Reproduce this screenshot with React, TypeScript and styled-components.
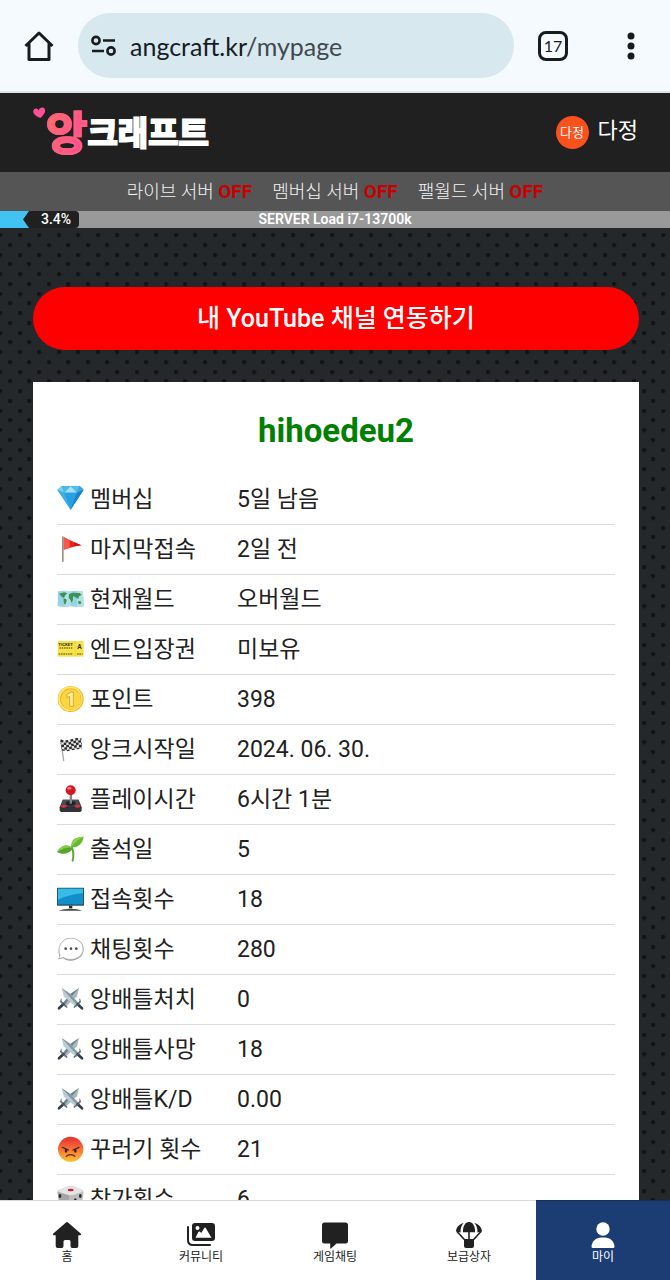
import React from 'react';
import styled, { createGlobalStyle } from 'styled-components';

const GlobalStyle = createGlobalStyle`
  *, *::before, *::after { box-sizing: border-box; }
  body {
    margin: 0;
    font-family: Roboto, 'Noto Sans CJK KR', sans-serif;
    color: #212121;
    background: #25282a;
  }
  button { font: inherit; border: 0; cursor: pointer; }
  a { color: inherit; text-decoration: none; }
`;

/* ---------- Browser bar ---------- */

const Screen = styled.div`
  display: flex;
  flex-direction: column;
  height: 100vh;
`;

const BrowserBar = styled.div`
  display: flex;
  align-items: center;
  flex: none;
  height: 93px;
  padding: 0 24px;
  background: #f5faff;
  border-bottom: 2px solid #dde3ea;
`;

const BarButton = styled.button`
  display: flex;
  align-items: center;
  justify-content: center;
  flex: none;
  width: 30px;
  height: 32px;
  padding: 0;
  background: none;
  color: #171c1f;
`;

const AddressBar = styled.button`
  display: flex;
  align-items: center;
  flex: 1;
  gap: 13px;
  height: 65px;
  margin: 0 24px;
  padding: 0 12px;
  border-radius: 33px;
  background: #d7e8ef;
  color: #171c1f;
  font-family: Lato, 'Noto Sans CJK KR', sans-serif;
  font-size: 25px;
  line-height: 32px;
`;

const UrlPath = styled.span`
  color: #41494d;
`;

const TabCount = styled.span`
  display: flex;
  align-items: center;
  justify-content: center;
  width: 30px;
  height: 30px;
  border: 3px solid #171c1f;
  border-radius: 8px;
  font-family: Lato, sans-serif;
  font-size: 16px;
  line-height: 16px;
`;

const BarSpacer = styled.span`
  flex: none;
  width: 48px;
`;

/* ---------- Site header ---------- */

const SiteHeader = styled.header`
  display: flex;
  align-items: center;
  justify-content: space-between;
  flex: none;
  height: 79px;
  padding: 0 32px 0 33px;
  background: #202020;
`;

const Logo = styled.a`
  display: flex;
  align-items: center;
  padding-bottom: 4px;
  font-family: 'Noto Sans CJK KR', sans-serif;
  font-weight: 700;
`;

const LogoHeart = styled.svg`
  align-self: flex-start;
  margin: 4px 0 0;
  transform: rotate(-6deg);
`;

const LogoAccent = styled.span`
  font-size: 45px;
  line-height: 56px;
  background: linear-gradient(110deg, #fb7360 15%, #fe5f7d 45%, #fb4f96 80%);
  background-clip: text;
  color: transparent;
  -webkit-text-stroke: 2px #fe5f80;
`;

const LogoText = styled.span`
  font-size: 33px;
  line-height: 48px;
  color: #fff;
  -webkit-text-stroke: 2px #fff;
`;

const UserLink = styled.a`
  display: flex;
  align-items: center;
  gap: 9px;
  color: #fff;
  font-size: 22px;
  line-height: 32px;
`;

const Avatar = styled.span`
  display: flex;
  align-items: center;
  justify-content: center;
  width: 33px;
  height: 33px;
  border-radius: 50%;
  background: #f8511d;
  font-size: 13px;
`;

const UserName = styled.span`
  padding-bottom: 4px;
`;

const ServerList = styled.ul`
  display: flex;
  align-items: center;
  justify-content: center;
  flex: none;
  gap: 20px;
  height: 39px;
  margin: 0;
  padding: 0;
  list-style: none;
  background: #555;
  color: #f4f4f4;
  font-size: 18px;
  font-weight: 300;
  line-height: 24px;
`;

const ServerState = styled.strong`
  font-size: 19px;
  font-weight: 700;
  color: #c80000;
`;

const LoadBar = styled.div`
  display: grid;
  grid-template-columns: 1fr auto 1fr;
  align-items: center;
  flex: none;
  height: 17px;
  background: #999;
  color: #fff;
  font-size: 14px;
  font-weight: 600;
  line-height: 17px;
`;

const LoadGauge = styled.div`
  display: flex;
  height: 17px;
`;

const LoadFill = styled.span`
  width: 29px;
  background: #41c4f2;
`;

const LoadTag = styled.span`
  margin-left: -6px;
  padding: 0 8px 0 18px;
  border-radius: 0 4px 4px 0;
  background: #202020;
  font-weight: 500;
  clip-path: polygon(0 50%, 6px 0, 100% 0, 100% 100%, 6px 100%);
`;

/* ---------- Page content ---------- */

const dot = 'radial-gradient(circle at 2px 2px, #101213 1px, #101213aa 2px, transparent 3px)';

const Content = styled.main`
  flex: 1;
  min-height: 0;
  overflow: auto;
  scrollbar-width: none;
  padding: 59px 31px 32px 33px;
  background-color: #24282a;
  background-image: ${Array(8).fill(dot).join(', ')};
  background-size: 39px 39px;
  background-position:
    -2px 5px, 18px 5px, 8px 15px, 27px 15px,
    -2px 25px, 18px 25px, 8px 34px, 27px 34px;
`;

const ConnectButton = styled.button`
  display: block;
  width: 100%;
  height: 63px;
  border-radius: 32px;
  background: #f00;
  color: #fff;
  font-size: 25px;
  font-weight: 500;
  line-height: 32px;
`;

const Card = styled.section`
  margin-top: 32px;
  padding: 24px;
  background: #fff;
`;

const Nickname = styled.h1`
  margin: 0 0 18px;
  color: #008000;
  font-size: 33px;
  font-weight: 700;
  line-height: 50px;
  text-align: center;
`;

const StatTable = styled.table`
  width: 100%;
  border-collapse: collapse;
  font-size: 23px;
  line-height: 32px;
  text-align: left;
`;

const StatRow = styled.tr`
  height: 50px;
  border-bottom: 1px solid #dcdcdc;
`;

const StatName = styled.th`
  width: 180px;
  padding: 2px 0 0;
  font-weight: 400;
`;

const StatLabel = styled.span`
  display: flex;
  align-items: center;
  gap: 6px;
  white-space: nowrap;
`;

const StatIcon = styled.svg`
  flex: none;
  margin-bottom: 4px;
`;

const StatValue = styled.td`
  padding: 2px 0 0;
`;

/* ---------- Bottom navigation ---------- */

const BottomNav = styled.nav`
  display: grid;
  grid-template-columns: repeat(5, 1fr);
  flex: none;
  height: 80px;
  background: #fff;
`;

const NavItem = styled.a<{ $active?: boolean }>`
  display: flex;
  flex-direction: column;
  align-items: center;
  justify-content: center;
  padding-top: 4px;
  border-top: 1px solid ${p => (p.$active ? '#152d57' : '#d8d8d8')};
  background: ${p => (p.$active ? '#1c3c74' : '#fff')};
  color: ${p => (p.$active ? '#fff' : '#212121')};
  font-size: 12px;
  line-height: 16px;
`;

/* ---------- Stat icons ---------- */

const Emoji = ({ children }: { children: React.ReactNode }) => (
  <StatIcon width="27" height="27" viewBox="0 0 81 81" aria-hidden="true">{children}</StatIcon>
);

const Diamond = () => (
  <Emoji>
    <path d="M14 6H68L80 17 41 77 1 17Z" fill="#2b9fe0" />
    <path d="M14 6 22 26 1 17Z" fill="#7dd0f2" />
    <path d="M14 6H41L22 26Z" fill="#4cb8ec" />
    <path d="M41 6 22 26H60Z" fill="#a5e2f8" />
    <path d="M41 6H68L60 26Z" fill="#54bdee" />
    <path d="M68 6 80 17 60 26Z" fill="#3aa5e2" />
    <path d="M1 17 22 26 41 77Z" fill="#3fb1e9" />
    <path d="M22 26H60L41 77Z" fill="#28a0e2" />
    <path d="M60 26 80 17 41 77Z" fill="#1a80c8" />
  </Emoji>
);

const RedFlag = () => (
  <Emoji>
    <path d="M20 6C38 16 54 22 73 31 52 33 36 40 20 44Z" fill="#f0201c" />
    <path d="M20 6C30 12 34 14 38 16V38L20 44Z" fill="#f9574a" />
    <path d="M52 22 73 31 52 34Z" fill="#d01216" />
    <rect x="15" y="4" width="5" height="77" rx="2" fill="#9b918c" />
  </Emoji>
);

const WorldMap = () => (
  <Emoji>
    <path d="M3 19 22 17 41 19 60 17 78 19 80 64 60 66 41 64 22 66 2 64Z" fill="#94d5e0" />
    <path d="M22 17 41 19V64L22 66ZM60 17 78 19 80 64 60 66Z" fill="#b0e2e8" />
    <path d="M7 26 22 22 31 25 25 31 21 38 16 37 10 31ZM20 40 28 43 29 49 24 60 20 52ZM36 27 47 23 68 24 74 30 66 34 64 42 58 38 53 35 48 34 48 44 44 53 39 43 35 39ZM63 49 71 48 73 56 65 57Z" fill="#3f9158" />
  </Emoji>
);

const Ticket = () => (
  <Emoji>
    <rect x="2" y="18" width="78" height="47" fill="#f6e34b" />
    <path d="M54 18V65" stroke="#d1b92d" strokeWidth="2" strokeDasharray="3 3" />
    <text x="4" y="34" fontSize="13" fontWeight="700" fill="#342f17">TICKET</text>
    <text x="61" y="41" fontSize="20" fontWeight="700" fill="#342f17">A</text>
    <path d="M7 39H46M5 57H48M60 57H77" stroke="#50491f" strokeWidth="3" strokeDasharray="5 2" />
  </Emoji>
);

const Coin = () => (
  <Emoji>
    <circle cx="41" cy="42" r="39" fill="#eab522" />
    <circle cx="40" cy="41" r="37" fill="#fde56b" />
    <circle cx="41" cy="42" r="32" fill="#efb92a" />
    <circle cx="42" cy="43" r="30" fill="#fbd643" />
    <path d="M29 29 42 21H49V64H38V34L31 38Z" fill="#fff09a" stroke="#c88b13" strokeWidth="2" />
  </Emoji>
);

const CheckeredFlag = () => (
  <Emoji>
    <path d="M11 13 20 77" stroke="#aaa" strokeWidth="4" strokeLinecap="round" />
    <path d="M10 13C32 23 50 5 73 10L75 43C54 39 38 54 16 45Z" fill="#e8e8e8" />
    <g fill="none" stroke="#292929" strokeWidth="7">
      <path d="M11 17C32 26 50 8 73 13" strokeDasharray="8 7" />
      <path d="M12 24C33 33 51 15 73 20" strokeDasharray="8 7" strokeDashoffset="7" />
      <path d="M13 31C34 40 52 22 74 27" strokeDasharray="8 7" />
      <path d="M14 38C35 47 53 29 74 34" strokeDasharray="8 7" strokeDashoffset="7" />
      <path d="M15 44C36 53 53 36 75 41" strokeWidth="4" strokeDasharray="8 7" />
    </g>
  </Emoji>
);

const Joystick = () => (
  <Emoji>
    <path d="M17 44H65L74 67V77L70 81H12L8 77V67Z" fill="#303236" />
    <path d="M18 44H64L70 64H12Z" fill="#4b4e53" />
    <ellipse cx="41" cy="55" rx="15" ry="7" fill="#202226" />
    <rect x="38" y="28" width="7" height="28" fill="#81858a" />
    <circle cx="41" cy="16" r="15" fill="#d91621" />
    <ellipse cx="37" cy="10" rx="6" ry="4" fill="#f5858a" />
    <ellipse cx="20" cy="64" rx="9" ry="4" fill="#ee2a3a" />
    <ellipse cx="62" cy="64" rx="9" ry="4" fill="#ee2a3a" />
  </Emoji>
);

const Seedling = () => (
  <Emoji>
    <path d="M44 37C51 50 50 63 47 77" fill="none" stroke="#65a838" strokeWidth="6" strokeLinecap="round" />
    <path d="M43 37C40 14 57 4 80 5 77 25 64 38 43 37Z" fill="#68b82f" />
    <path d="M44 34C42 17 58 7 80 5 66 12 54 20 44 34Z" fill="#8fd34f" />
    <path d="M47 41C36 57 17 61 0 51 12 31 30 24 47 41Z" fill="#57a52a" />
    <path d="M45 39C29 34 15 44 0 51 12 31 30 24 45 39Z" fill="#86cc48" />
  </Emoji>
);

const Monitor = () => (
  <Emoji>
    <rect x="0" y="8" width="81" height="54" rx="1" fill="#24566e" />
    <rect x="3" y="11" width="75" height="47" fill="#128fc9" />
    <path d="M3 11H78V25C50 27 24 34 3 44Z" fill="#36bce6" />
    <path d="M36 62H46V70H36Z" fill="#292d30" />
    <path d="M5 77C22 69 60 69 76 77Z" fill="#44494c" />
  </Emoji>
);

const Bubble = () => (
  <Emoji>
    <path d="M41 9C63 9 80 22 80 43S62 77 41 77C30 77 23 74 17 69 13 72 8 73 3 72 7 68 8 63 6 59 0 32 16 9 41 9Z" fill="#9a9a9a" />
    <path d="M40 10C62 9 78 23 78 42S61 73 41 73C30 73 24 71 18 66 14 69 10 70 6 70 9 65 10 61 8 57 1 31 17 11 40 10Z" fill="#fff" stroke="#b5b5b5" strokeWidth="2" />
    <g fill="#505050"><circle cx="26" cy="41" r="4" /><circle cx="42" cy="41" r="4" /><circle cx="58" cy="41" r="4" /></g>
  </Emoji>
);

const Swords = () => (
  <Emoji>
    <path d="M66 9 60 34 24 67 15 57 43 25Z" fill="#a7b8c1" />
    <path d="M66 9 20 62 15 57 43 25Z" fill="#70838f" />
    <path d="M14 9 20 34 58 67 67 57 37 25Z" fill="#bdcbd2" />
    <path d="M14 9 62 62 67 57 37 25Z" fill="#8497a2" />
    <path d="M11 49 29 66M70 49 52 66" stroke="#61717c" strokeWidth="5" strokeLinecap="round" />
    <path d="M19 58 6 70M62 58 75 70" stroke="#353e47" strokeWidth="8" strokeLinecap="round" />
    <path d="M13 41C10 52 16 60 25 62M68 41C71 52 66 60 56 62" stroke="#72818b" strokeWidth="3" fill="none" />
  </Emoji>
);

const Angry = () => (
  <Emoji>
    <defs>
      <linearGradient id="angry" x1="0" y1="0" x2="0" y2="1">
        <stop offset="0.1" stopColor="#ec3831" /><stop offset="0.55" stopColor="#f57c35" /><stop offset="1" stopColor="#fdc531" />
      </linearGradient>
    </defs>
    <circle cx="41" cy="43" r="38" fill="url(#angry)" />
    <path d="M16 37 34 45M66 37 48 45" stroke="#48231b" strokeWidth="4" strokeLinecap="round" />
    <ellipse cx="27" cy="47" rx="4" ry="6" fill="#48231b" />
    <ellipse cx="55" cy="47" rx="4" ry="6" fill="#48231b" />
    <path d="M28 64C34 57 48 57 54 64" fill="none" stroke="#642c1a" strokeWidth="4" strokeLinecap="round" />
  </Emoji>
);

const Dice = () => (
  <Emoji>
    <path d="M7 14 34 4H50L74 14C80 17 80 22 79 28L73 62 43 80H35L8 62 2 28C1 20 2 16 7 14Z" fill="#bdbdbd" />
    <path d="M7 14 34 4H50L74 14C78 17 78 20 73 22L47 31H35L8 22C3 20 3 16 7 14Z" fill="#e4e4e4" />
    <path d="M2 21 36 31V79L8 62Z" fill="#a4a4a4" />
    <ellipse cx="41" cy="15" rx="9" ry="4" fill="#cb1935" />
    <ellipse cx="9" cy="33" rx="4" ry="6" fill="#2a2a2a" />
    <ellipse cx="70" cy="33" rx="4" ry="6" fill="#2a2a2a" />
    <ellipse cx="55" cy="46" rx="4" ry="6" fill="#2a2a2a" />
  </Emoji>
);

const stats: { Icon: React.FC; name: string; value: string }[] = [
  { Icon: Diamond, name: '멤버십', value: '5일 남음' },
  { Icon: RedFlag, name: '마지막접속', value: '2일 전' },
  { Icon: WorldMap, name: '현재월드', value: '오버월드' },
  { Icon: Ticket, name: '엔드입장권', value: '미보유' },
  { Icon: Coin, name: '포인트', value: '398' },
  { Icon: CheckeredFlag, name: '앙크시작일', value: '2024. 06. 30.' },
  { Icon: Joystick, name: '플레이시간', value: '6시간 1분' },
  { Icon: Seedling, name: '출석일', value: '5' },
  { Icon: Monitor, name: '접속횟수', value: '18' },
  { Icon: Bubble, name: '채팅횟수', value: '280' },
  { Icon: Swords, name: '앙배틀처치', value: '0' },
  { Icon: Swords, name: '앙배틀사망', value: '18' },
  { Icon: Swords, name: '앙배틀K/D', value: '0.00' },
  { Icon: Angry, name: '꾸러기 횟수', value: '21' },
  { Icon: Dice, name: '참가횟수', value: '6' },
];

/* ---------- Navigation icons ---------- */

const NavIcon = ({ children }: { children: React.ReactNode }) => (
  <svg width="30" height="28" viewBox="0 0 30 28" fill="currentColor" aria-hidden="true">{children}</svg>
);

const navItems = [
  {
    label: '홈',
    icon: <path d="M14 1.4Q15 .6 16 1.4L28.7 12.4Q29.8 13.8 28.4 14.2H26.3V25Q26.3 27 24.3 27H20.2Q18.5 27 18.5 25V20.5Q18.5 19 17 19H13Q11.5 19 11.5 20.5V25Q11.5 27 9.8 27H5.7Q3.7 27 3.7 25V14.2H1.6Q.2 13.8 1.3 12.4Z" />,
  },
  {
    label: '커뮤니티',
    icon: (
      <>
        <path fillRule="evenodd" d="M9 2H26Q29 2 29 5V17Q29 20 26 20H9Q6 20 6 17V5Q6 2 9 2ZM11.5 5A2 2 0 1 0 11.5 9A2 2 0 1 0 11.5 5ZM9.500 16.800H25.500L20 7.400Q19 5.800 18 7.400L15.200 12 13.800 10.600Q13 10 12.400 11Z" />
        <path d="M2 6V19Q2 24 7 24H24" fill="none" stroke="currentColor" strokeWidth="2" strokeLinecap="round" />
      </>
    ),
  },
  {
    label: '게임채팅',
    icon: <path d="M4.500 1.500H25.500Q28 1.500 28 4V20Q28 22.500 25.500 22.500H16.500L11 27.500Q10.200 28 10.200 26.800V22.500H4.500Q2 22.500 2 20V4Q2 1.500 4.500 1.500Z" />,
  },
  {
    label: '보급상자',
    icon: (
      <>
        <path d="M9 11.300C8.500 6 11 1 15 1S21.500 6 21 11.300Z" />
        <path d="M9.700 1.800C5 3.300 2 7 2 10.500L6.500 11.500C6.400 7.500 7.500 4 9.700 1.800ZM20.300 1.800C25 3.300 28 7 28 10.500L23.500 11.500C23.600 7.500 22.500 4 20.300 1.800Z" />
        <path d="M3 10.500 10.800 19M27 10.500 19.200 19M15 11V19" stroke="currentColor" strokeWidth="1.600" />
        <path d="M10 18H20V25Q20 27 18 27H12Q10 27 10 25Z" />
      </>
    ),
  },
  {
    label: '마이',
    active: true,
    icon: (
      <>
        <circle cx="15" cy="8" r="6.700" />
        <path d="M3.500 26C3.500 20.500 8 16.500 13 16.500H17C22 16.500 26.500 20.500 26.500 26Q26.500 27 25 27H5Q3.500 27 3.500 26Z" />
      </>
    ),
  },
];

const servers = ['라이브 서버', '멤버십 서버', '팰월드 서버'];

export default function App() {
  return (
    <>
      <GlobalStyle />
      <Screen>
        <BrowserBar>
          <BarButton aria-label="Home">
            <svg width="30" height="32" viewBox="0 0 30 32" fill="none" stroke="currentColor" strokeWidth="3" strokeLinejoin="round" aria-hidden="true">
              <path d="M1.500 16 15 3 28.500 16M5 13.500V29.500H25V13.500" />
            </svg>
          </BarButton>
          <AddressBar aria-label="angcraft.kr/mypage">
            <svg width="27" height="22" viewBox="0 0 27 22" fill="none" stroke="currentColor" strokeWidth="2.600" aria-hidden="true">
              <circle cx="6" cy="5.500" r="3.600" />
              <path d="M13 5.500H25M2 16H14" />
              <circle cx="21" cy="16" r="3.600" />
            </svg>
            <span>angcraft.kr<UrlPath>/mypage</UrlPath></span>
          </AddressBar>
          <BarButton aria-label="Tabs"><TabCount>17</TabCount></BarButton>
          <BarSpacer />
          <BarButton aria-label="Menu">
            <svg width="8" height="28" viewBox="0 0 8 28" fill="currentColor" aria-hidden="true">
              <circle cx="4" cy="4" r="3.500" /><circle cx="4" cy="14" r="3.500" /><circle cx="4" cy="24" r="3.500" />
            </svg>
          </BarButton>
        </BrowserBar>

        <SiteHeader>
          <Logo href="#">
            <LogoHeart width="13" height="12" viewBox="0 0 13 12" aria-hidden="true">
              <path d="M7 11C3 9 0 6.500 .5 3.500 1 .8 4.500 .3 6 3.200 7 .3 11.500-.2 12.300 3 13 6 9.500 9 7 11Z" fill="#fb4f96" />
            </LogoHeart>
            <LogoAccent>앙</LogoAccent>
            <LogoText>크래프트</LogoText>
          </Logo>
          <UserLink href="#">
            <Avatar>다정</Avatar>
            <UserName>다정</UserName>
          </UserLink>
        </SiteHeader>

        <ServerList>
          {servers.map(name => (
            <li key={name}>{name} <ServerState>OFF</ServerState></li>
          ))}
        </ServerList>

        <LoadBar>
          <LoadGauge>
            <LoadFill />
            <LoadTag>3.4%</LoadTag>
          </LoadGauge>
          <span>SERVER Load i7-13700k</span>
        </LoadBar>

        <Content>
          <ConnectButton>내 YouTube 채널 연동하기</ConnectButton>
          <Card>
            <Nickname>hihoedeu2</Nickname>
            <StatTable>
              <tbody>
                {stats.map(({ Icon, name, value }) => (
                  <StatRow key={name}>
                    <StatName scope="row"><StatLabel><Icon />{name}</StatLabel></StatName>
                    <StatValue>{value}</StatValue>
                  </StatRow>
                ))}
              </tbody>
            </StatTable>
          </Card>
        </Content>

        <BottomNav>
          {navItems.map(({ label, icon, active }) => (
            <NavItem key={label} href="#" $active={active}>
              <NavIcon>{icon}</NavIcon>
              {label}
            </NavItem>
          ))}
        </BottomNav>
      </Screen>
    </>
  );
}
